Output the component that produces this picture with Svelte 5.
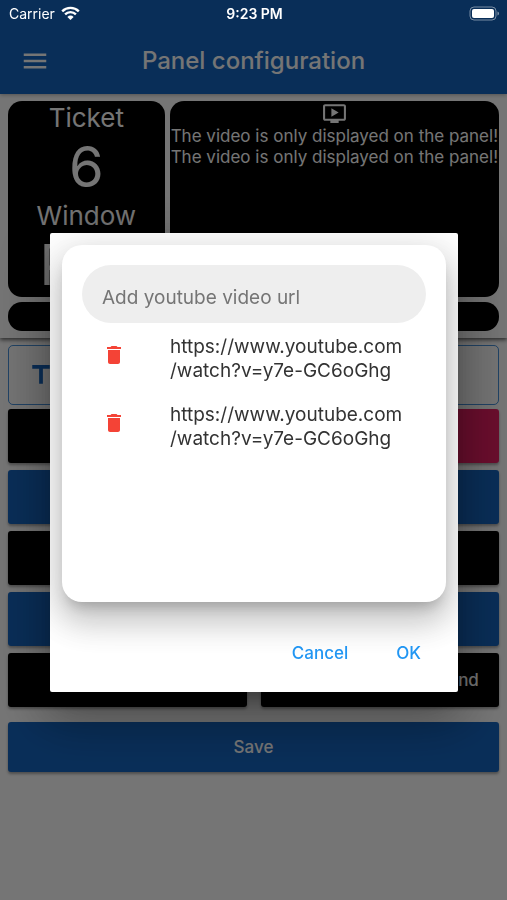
<script lang="ts">
    const rows = [
        { left: "black", right: "pink" },
        { left: "blue", right: "blue" },
        { left: "black", right: "black" },
        { left: "blue", right: "blue" },
    ];

    let url = $state("");
    let videos = $state([
        "https://www.youtube.com/watch?v=y7e-GC6oGhg",
        "https://www.youtube.com/watch?v=y7e-GC6oGhg",
    ]);

    function remove(idx: number) {
        videos = videos.filter((_, i) => i !== idx);
    }
</script>

<div class="status">
    <div class="carrier">
        <span>Carrier</span>
        <svg width="19" height="15" viewBox="0 0 19 15" fill="none" stroke="white" stroke-width="2.4">
            <path d="M1.2 5.3a11.8 11.8 0 0 1 16.6 0" />
            <path d="M4.1 8.4a7.6 7.6 0 0 1 10.8 0" />
            <path d="M9.5 14 6.4 10.9a4.4 4.4 0 0 1 6.2 0z" fill="white" stroke="none" />
        </svg>
    </div>
    <strong>9:23 PM</strong>
    <svg class="battery" width="31" height="15" viewBox="0 0 31 15">
        <rect x="1" y="1" width="26" height="13" rx="4" fill="none" stroke="white" stroke-opacity="0.45" />
        <rect x="3" y="3" width="22" height="9" rx="2" fill="white" />
        <path d="M28.5 5.5v4q1.5-.6 1.5-2t-1.5-2z" fill="white" fill-opacity="0.5" />
    </svg>
</div>

<header>
    <button class="menu" aria-label="Menu">
        <svg width="30" height="30" viewBox="0 0 24 24" fill="currentColor">
            <path d="M3 18h18v-2H3v2zm0-5h18v-2H3v2zm0-7v2h18V6H3z" />
        </svg>
    </button>
    <h1>Panel configuration</h1>
</header>

<main>
    <section class="preview">
        <div class="ticket">
            <span>Ticket</span>
            <span class="number">6</span>
            <span>Window</span>
            <span class="number">P01</span>
        </div>
        <div class="video">
            <svg width="25" height="25" viewBox="0 0 24 24" fill="currentColor">
                <path d="M21 3H3c-1.11 0-2 .89-2 2v12c0 1.1.89 2 2 2h5v2h8v-2h5c1.1 0 1.99-.9 1.99-2L23 5c0-1.11-.9-2-2-2zm0 14H3V5h18v12zm-5-6l-7 4V7z" />
            </svg>
            <p>The video is only displayed on the panel!</p>
            <p>The video is only displayed on the panel!</p>
        </div>
        <div class="ticker"></div>
    </section>

    <section class="options">
        <button class="outlined" aria-label="Text">
            <svg width="30" height="30" viewBox="0 0 24 24" fill="currentColor">
                <path d="M5 4v3h5.5v12h3V7H19V4z" />
            </svg>
        </button>
        {#each rows as row}
            <div class="row">
                <button class={row.left} aria-label="Left color"></button>
                <button class={row.right} aria-label="Right color"></button>
            </div>
        {/each}
        <div class="row split">
            <button class="black" aria-label="Text color"></button>
            <button class="black">Video panel background</button>
        </div>
        <button class="save blue">Save</button>
    </section>
</main>

<div class="overlay">
    <div class="dialog" role="dialog" aria-label="Videos">
        <div class="card">
            <input type="text" bind:value={url} placeholder="Add youtube video url" aria-label="Add youtube video url" />
            <ul>
                {#each videos as video, idx}
                    <li>
                        <button class="delete" aria-label="Delete" onclick={() => remove(idx)}>
                            <svg width="24" height="24" viewBox="0 0 24 24" fill="currentColor">
                                <path d="M6 19c0 1.1.9 2 2 2h8c1.1 0 2-.9 2-2V7H6v12zM19 4h-3.5l-1-1h-5l-1 1H5v2h14V4z" />
                            </svg>
                        </button>
                        <span>{video}</span>
                    </li>
                {/each}
            </ul>
        </div>
        <div class="actions">
            <button>Cancel</button>
            <button>OK</button>
        </div>
    </div>
</div>

<style>
    :global(body) {
        font-family: Inter, Roboto, sans-serif;
        background: white;
    }

    button {
        font: inherit;
        color: inherit;
        border: none;
        background: none;
        padding: 0;
        cursor: pointer;
    }

    svg {
        display: block;
    }

    .status {
        position: fixed;
        inset: 0 0 auto;
        z-index: 3;
        display: grid;
        grid-template-columns: 1fr auto 1fr;
        align-items: center;
        height: 27px;
        padding: 0 7px 0 9px;
        color: white;
        font-size: 14px;
    }
    .status strong {
        font-weight: 600;
    }
    .carrier {
        display: flex;
        align-items: center;
        gap: 6px;
    }
    .battery {
        justify-self: end;
    }

    header {
        position: relative;
        display: grid;
        grid-template-columns: 1fr auto 1fr;
        align-items: center;
        height: 67px;
        padding: 27px 20px 0;
        background: #1565c0;
        color: white;
        box-shadow: 0 1px 4px rgba(0, 0, 0, 0.3);
    }
    .menu {
        justify-self: start;
    }
    h1 {
        margin: 0;
        font-size: 24px;
        font-weight: 500;
    }

    .preview {
        display: grid;
        grid-template-columns: 157fr 330fr;
        grid-template-rows: 196px 29px;
        gap: 5px;
        padding: 7px 8px;
        color: white;
        box-shadow: 0 2px 4px rgba(0, 0, 0, 0.6);
    }
    .preview > div {
        background: black;
        border-radius: 14px;
    }
    .ticket {
        display: flex;
        flex-direction: column;
        align-items: center;
        font-size: 26px;
        line-height: 34px;
    }
    .number {
        font-size: 56px;
        line-height: 64px;
    }
    .video {
        display: flex;
        flex-direction: column;
        align-items: center;
    }
    .video p {
        margin: 0;
        font-size: 17px;
        line-height: 21px;
        white-space: nowrap;
    }
    .preview > .ticker {
        grid-column: 1 / -1;
    }

    .options {
        display: flex;
        flex-direction: column;
        gap: 7px;
        padding: 7px 8px;
    }
    .options button {
        border-radius: 3px;
        font-size: 17px;
        font-weight: 500;
    }
    .options .outlined {
        display: flex;
        align-items: center;
        height: 60px;
        margin-bottom: -3px;
        padding: 0 17px;
        border: 1px solid rgba(25, 118, 210, 0.8);
        border-radius: 5px;
        color: #1565c0;
    }
    .row {
        display: grid;
        grid-template-columns: 1fr 1fr;
        grid-auto-rows: 54px;
    }
    .split {
        gap: 14px;
    }
    .black,
    .blue,
    .pink {
        color: white;
        box-shadow: 0 2px 3px rgba(0, 0, 0, 0.35);
    }
    .black {
        background: black;
    }
    .blue {
        background: #1565c0;
    }
    .pink {
        background: #e91e63;
    }
    .save {
        height: 50px;
        margin-top: 8px;
    }

    .overlay {
        position: fixed;
        inset: 0;
        z-index: 2;
        display: flex;
        align-items: center;
        justify-content: center;
        padding: 25px 49px 0 50px;
        background: rgba(0, 0, 0, 0.54);
    }
    .dialog {
        flex: 1;
        background: white;
        border-radius: 2px;
        overflow: hidden;
        box-shadow:
            0 14px 19px -9px rgba(0, 0, 0, 0.3),
            0 30px 48px 4px rgba(0, 0, 0, 0.2),
            0 11px 58px 10px rgba(0, 0, 0, 0.2);
    }
    .card {
        min-height: 317px;
        margin: 12px;
        padding: 20px;
        border-radius: 20px;
        background: white;
        box-shadow:
            0 10px 13px -6px rgba(0, 0, 0, 0.2),
            0 20px 31px 3px rgba(0, 0, 0, 0.14),
            0 8px 38px 7px rgba(0, 0, 0, 0.12);
    }
    input {
        box-sizing: border-box;
        width: 100%;
        height: 58px;
        padding: 6px 20px 0;
        border: none;
        border-radius: 29px;
        outline: none;
        background: #eeeeee;
        color: #212121;
        font: inherit;
        font-size: 19px;
    }
    input::placeholder {
        color: #757575;
    }
    ul {
        display: flex;
        flex-direction: column;
        gap: 20px;
        margin: 0;
        padding: 12px 20px;
        list-style: none;
    }
    li {
        display: grid;
        grid-template-columns: 24px 1fr;
        gap: 44px;
        align-items: start;
        font-size: 19px;
        line-height: 24px;
        color: #333333;
    }
    li span {
        line-break: anywhere;
    }
    .delete {
        padding-top: 8px;
        color: #f44336;
    }
    .actions {
        display: flex;
        justify-content: flex-end;
        gap: 24px;
        padding: 17px 25px;
        color: #2196f3;
        font-size: 17px;
        font-weight: 500;
    }
    .actions button {
        height: 44px;
        padding: 0 12px;
    }
</style>
